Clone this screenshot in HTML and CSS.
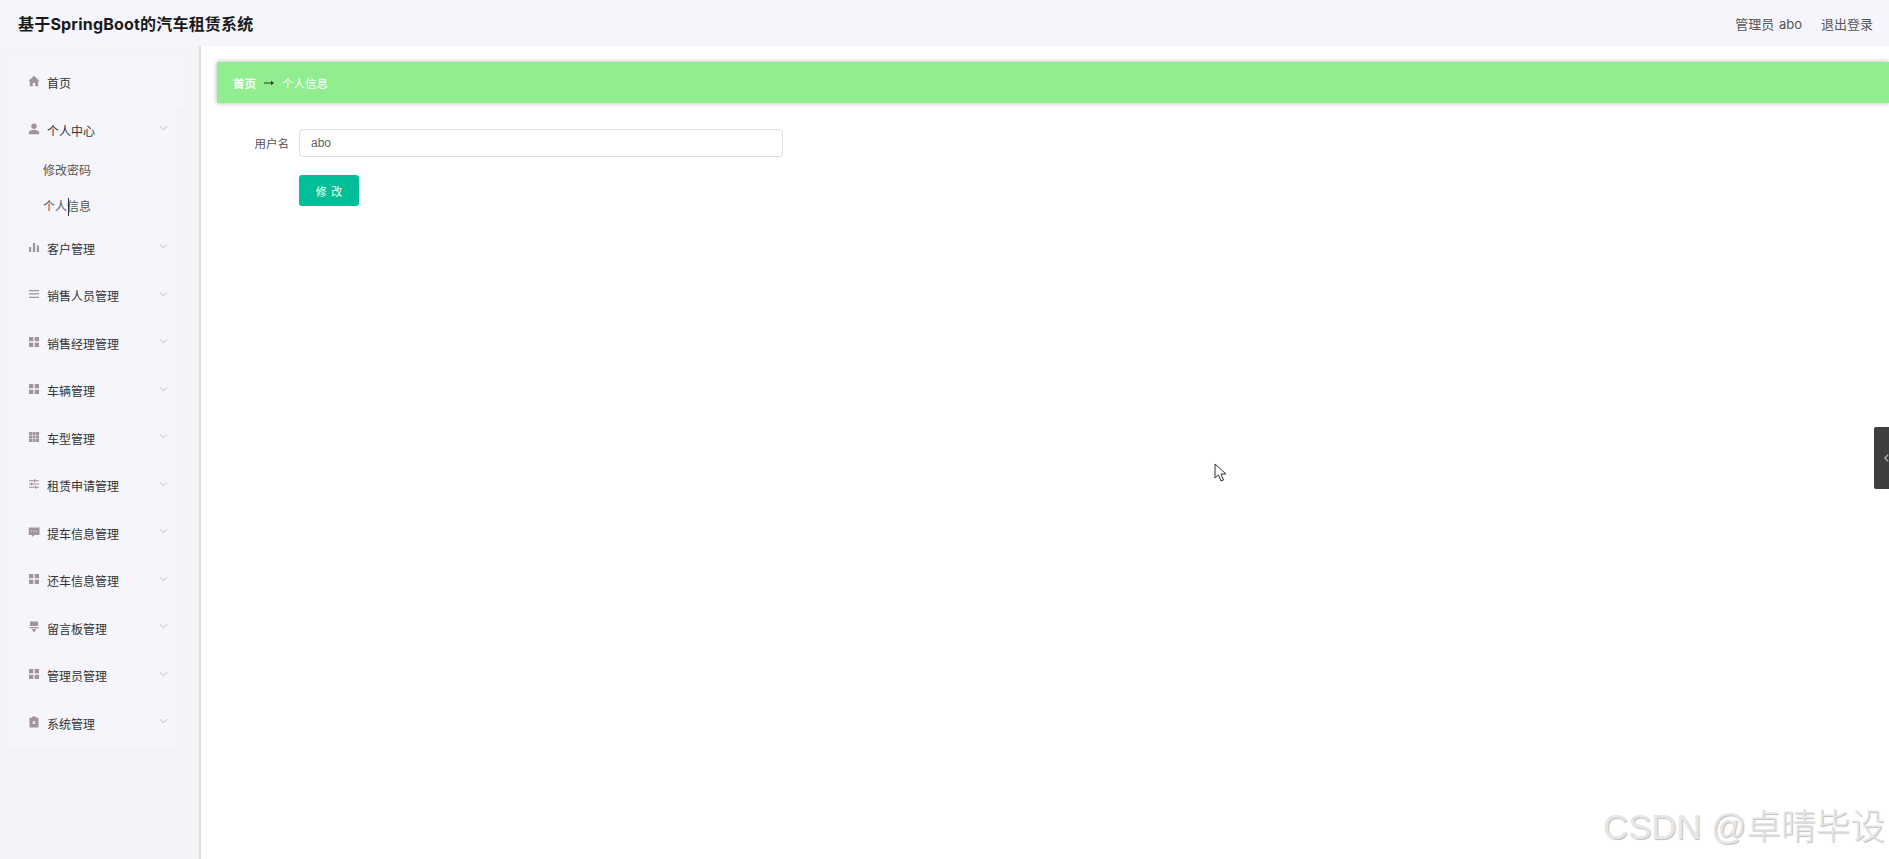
FILE: index.html
```html
<!DOCTYPE html>
<html lang="zh-CN">
<head>
  <meta charset="UTF-8">
  <title>基于SpringBoot的汽车租赁系统</title>
  <link rel="stylesheet" href="styles.css">
</head>
<body>

  <header class="topbar">
    <div class="app-title">基于SpringBoot的汽车租赁系统</div>
    <div class="user-box">
      <span>管理员 abo</span>
      <span>退出登录</span>
    </div>
  </header>

  <div class="layout">
    <aside class="sidebar">
      <ul class="menu">
        <li class="menu-item home-item">
          <svg class="icon" viewBox="0 0 12 12"><path d="M6 .8.500 6 1.800 6.300V11.200H4.800V8H7.200V11.200H10.200V6.300L11.500 6z"/></svg>
          <span>首页</span>
        </li>
        <li class="menu-item">
          <svg class="icon" viewBox="0 0 12 12"><circle cx="6" cy="3.200" r="2.700"/><path d="M.8 11.200V9.400c0-1.900 2.500-2.700 5.200-2.700s5.200.8 5.200 2.700v1.800z"/></svg>
          <span>个人中心</span>
          <svg class="arrow" viewBox="0 0 10 6"><path d="M1 1l4 4 4-4"/></svg>
        </li>
        <li class="sub-item first-sub">修改密码</li>
        <li class="sub-item">个人信息</li>
        <li class="menu-item">
          <svg class="icon" viewBox="0 0 12 12"><path d="M1 6h2.200v5H1zM4.900 2h2.200v9H4.900zM8.800 4.500H11V11H8.800z"/></svg>
          <span>客户管理</span>
          <svg class="arrow" viewBox="0 0 10 6"><path d="M1 1l4 4 4-4"/></svg>
        </li>
        <li class="menu-item">
          <svg class="icon" viewBox="0 0 12 12"><path d="M1 2h10v1.300H1zM1 5.300h10v1.300H1zM1 8.700h10V10H1z"/></svg>
          <span>销售人员管理</span>
          <svg class="arrow" viewBox="0 0 10 6"><path d="M1 1l4 4 4-4"/></svg>
        </li>
        <li class="menu-item">
          <svg class="icon" viewBox="0 0 12 12"><path d="M1 1h4.300v4.300H1zM6.700 1H11v4.300H6.700zM1 6.700h4.300V11H1zM6.700 6.700H11V11H6.700z"/></svg>
          <span>销售经理管理</span>
          <svg class="arrow" viewBox="0 0 10 6"><path d="M1 1l4 4 4-4"/></svg>
        </li>
        <li class="menu-item">
          <svg class="icon" viewBox="0 0 12 12"><path d="M1 1h4.300v4.300H1zM6.700 1H11v4.300H6.700zM1 6.700h4.300V11H1zM6.700 6.700H11V11H6.700z"/></svg>
          <span>车辆管理</span>
          <svg class="arrow" viewBox="0 0 10 6"><path d="M1 1l4 4 4-4"/></svg>
        </li>
        <li class="menu-item">
          <svg class="icon" viewBox="0 0 12 12"><path d="M1 1h3v3H1zM4.500 1h3v3h-3zM8 1h3v3H8zM1 4.500h3v3H1zM4.500 4.500h3v3h-3zM8 4.500h3v3H8zM1 8h3v3H1zM4.500 8h3v3h-3zM8 8h3v3H8z"/></svg>
          <span>车型管理</span>
          <svg class="arrow" viewBox="0 0 10 6"><path d="M1 1l4 4 4-4"/></svg>
        </li>
        <li class="menu-item">
          <svg class="icon" viewBox="0 0 12 12"><path d="M1 2.200h5V1.200h1.300v1H11v1H7.300v1H6v-1H1zM1 5.500h2V4.600h1.300v.9H11v1H4.300v1H3v-1H1zM1 8.800h6V7.800h1.300v1H11v1H8.300v1H7v-1H1z"/></svg>
          <span>租赁申请管理</span>
          <svg class="arrow" viewBox="0 0 10 6"><path d="M1 1l4 4 4-4"/></svg>
        </li>
        <li class="menu-item">
          <svg class="icon" viewBox="0 0 12 12"><path fill-rule="evenodd" d="M.8 1.500h10.700v7.500H6.500L4 11V9H.8zM3 4.600v1h1v-1zM5.500 4.600v1h1v-1zM8 4.600v1h1v-1z"/></svg>
          <span>提车信息管理</span>
          <svg class="arrow" viewBox="0 0 10 6"><path d="M1 1l4 4 4-4"/></svg>
        </li>
        <li class="menu-item">
          <svg class="icon" viewBox="0 0 12 12"><path d="M1 1h4.300v4.300H1zM6.700 1H11v4.300H6.700zM1 6.700h4.300V11H1zM6.700 6.700H11V11H6.700z"/></svg>
          <span>还车信息管理</span>
          <svg class="arrow" viewBox="0 0 10 6"><path d="M1 1l4 4 4-4"/></svg>
        </li>
        <li class="menu-item">
          <svg class="icon" viewBox="0 0 12 12"><path d="M2 .5h8v4.500H2zM1.500 6h9v1.300h-9zM3.500 8h5L6 11.500z"/></svg>
          <span>留言板管理</span>
          <svg class="arrow" viewBox="0 0 10 6"><path d="M1 1l4 4 4-4"/></svg>
        </li>
        <li class="menu-item">
          <svg class="icon" viewBox="0 0 12 12"><path d="M1 1h4.300v4.300H1zM6.700 1H11v4.300H6.700zM1 6.700h4.300V11H1zM6.700 6.700H11V11H6.700z"/></svg>
          <span>管理员管理</span>
          <svg class="arrow" viewBox="0 0 10 6"><path d="M1 1l4 4 4-4"/></svg>
        </li>
        <li class="menu-item">
          <svg class="icon" viewBox="0 0 12 12"><path fill-rule="evenodd" d="M4 .5h4v1.200h2.500V11.500h-9V1.700H4zM4.300 5l1 1.500-1 1.500h1l.7-.9.700.9h1l-1-1.500 1-1.500h-1L6 5.900 5.300 5z"/></svg>
          <span>系统管理</span>
          <svg class="arrow" viewBox="0 0 10 6"><path d="M1 1l4 4 4-4"/></svg>
        </li>
      </ul>
    </aside>

    <main class="content">
      <div class="breadcrumb">
        <span class="crumb-home">首页</span>
        <svg class="crumb-arrow" viewBox="0 0 10 6"><path d="M0 2.500h7V.8L10 3 7 5.200V3.500H0z"/></svg>
        <span>个人信息</span>
      </div>

      <form class="profile-form">
        <div class="form-row">
          <label class="form-label">用户名</label>
          <input class="form-input" type="text" value="abo">
        </div>
        <div class="form-row">
          <span class="form-label"></span>
          <button class="btn-save" type="button">修 改</button>
        </div>
      </form>
    </main>
  </div>

  <!-- things on top of the page -->
  <div class="text-caret"></div>
  <svg class="mouse-pointer" viewBox="0 0 14 20"><path d="M1 1v14l3.500-3 2.500 6 2.500-1-2.500-6H12z"/></svg>
  <div class="side-tab"><svg viewBox="0 0 6 10"><path d="M5 1 1 5l4 4"/></svg></div>
  <div class="watermark">CSDN @卓晴毕设</div>

</body>
</html>
```

FILE: styles.css
```css
* { box-sizing: border-box; }

html, body {
  height: 100%;
}

body {
  margin: 0;
  overflow: hidden;
  background-color: #fff;
  color: #333;
  font-family: Inter, "Noto Sans CJK SC", sans-serif;
  font-size: 12px;
}

.topbar {
  height: 46px;
  padding: 0 16px 0 18px;
  display: flex;
  align-items: center;
  justify-content: space-between;
  background-color: #f5f5fb;
}

.app-title {
  font-size: 16px;
  font-weight: bold;
  letter-spacing: 0.2px;
  color: #1a1a1a;
}

.user-box {
  display: flex;
  gap: 19px;
  font-size: 13px;
  word-spacing: 1px;
  color: #555;
}

.layout {
  display: flex;
  height: 813px;
}

.sidebar {
  width: 201px;
  padding: 12px 23px 0 6px;
  background-color: #f4f4f8;
  border-right: 2px solid #dddddd;
}

.menu {
  list-style: none;
  margin: 0;
  padding: 0;
  background-color: #f5f5fb;
}

.menu-item {
  height: 47.5px;
  padding-left: 22px;
  display: flex;
  align-items: center;
  color: #333;
}

.home-item {
  height: 48.5px;
  padding-top: 1px;
  margin-right: -8px;
  background-color: #f5f5fb;
}

.icon {
  width: 12px;
  height: 12px;
  margin-right: 7px;
  margin-top: -3px;
  fill: #a3939b;
  flex-shrink: 0;
}

.arrow {
  width: 9px;
  height: 6px;
  margin-left: auto;
  margin-right: 8px;
  margin-top: -4px;
  fill: none;
  stroke: #b5b5bd;
  stroke-width: 1;
}

.sub-item {
  height: 35.5px;
  line-height: 36px;
  padding-left: 37px;
  color: #555;
}

.first-sub {
  height: 36px;
  margin-top: -1px;
}

.content {
  flex: 1;
  padding: 16px 0 0 16px;
}

.breadcrumb {
  height: 41px;
  padding-left: 16px;
  display: flex;
  align-items: center;
  background-color: #90ee90;
  color: #fff;
  font-size: 11.500px;
  box-shadow: 0 0 5px rgba(0, 0, 0, 0.3);
}

.crumb-home {
  font-weight: bold;
}

.crumb-arrow {
  width: 10px;
  height: 6px;
  margin: 0 8px;
  fill: #333;
}

.profile-form {
  padding-top: 26px;
}

.form-row {
  display: flex;
  align-items: center;
  margin-bottom: 18px;
}

.form-label {
  width: 82px;
  padding-right: 10px;
  text-align: right;
  font-size: 11.500px;
  color: #555;
}

.form-input {
  width: 484px;
  height: 28px;
  padding: 0 11px;
  border: 1px solid #dcdfe6;
  border-radius: 4px;
  outline: none;
  font-family: "Liberation Sans", sans-serif;
  font-size: 12px;
  color: #606266;
}

.btn-save {
  width: 60px;
  height: 31px;
  border: none;
  border-radius: 3px;
  background-color: #00bf98;
  color: #fff;
  font-family: "Noto Sans CJK SC", sans-serif;
  font-size: 11px;
  word-spacing: 2px;
}

.text-caret {
  position: absolute;
  left: 68px;
  top: 198px;
  width: 1px;
  height: 18px;
  background-color: #333;
}

.mouse-pointer {
  position: absolute;
  left: 1214px;
  top: 463px;
  width: 14px;
  height: 20px;
  fill: #fff;
  stroke: #333;
  stroke-width: 1;
}

.side-tab {
  position: absolute;
  left: 1874px;
  top: 427px;
  width: 15px;
  height: 62px;
  padding-left: 10px;
  display: flex;
  align-items: center;
  background-color: #3f3f3f;
  border-radius: 2px 0 0 2px;
}

.side-tab svg {
  width: 5px;
  height: 10px;
  fill: none;
  stroke: #bbb;
  stroke-width: 1.500;
}

.watermark {
  position: absolute;
  right: 4px;
  bottom: 10px;
  font-family: "Liberation Sans", "Noto Sans CJK SC", sans-serif;
  font-size: 34.700px;
  font-weight: 300;
  line-height: 44px;
  color: #e6e6e6;
  text-shadow: 1px 1px 1px #bdbdbd;
  white-space: nowrap;
}
```
